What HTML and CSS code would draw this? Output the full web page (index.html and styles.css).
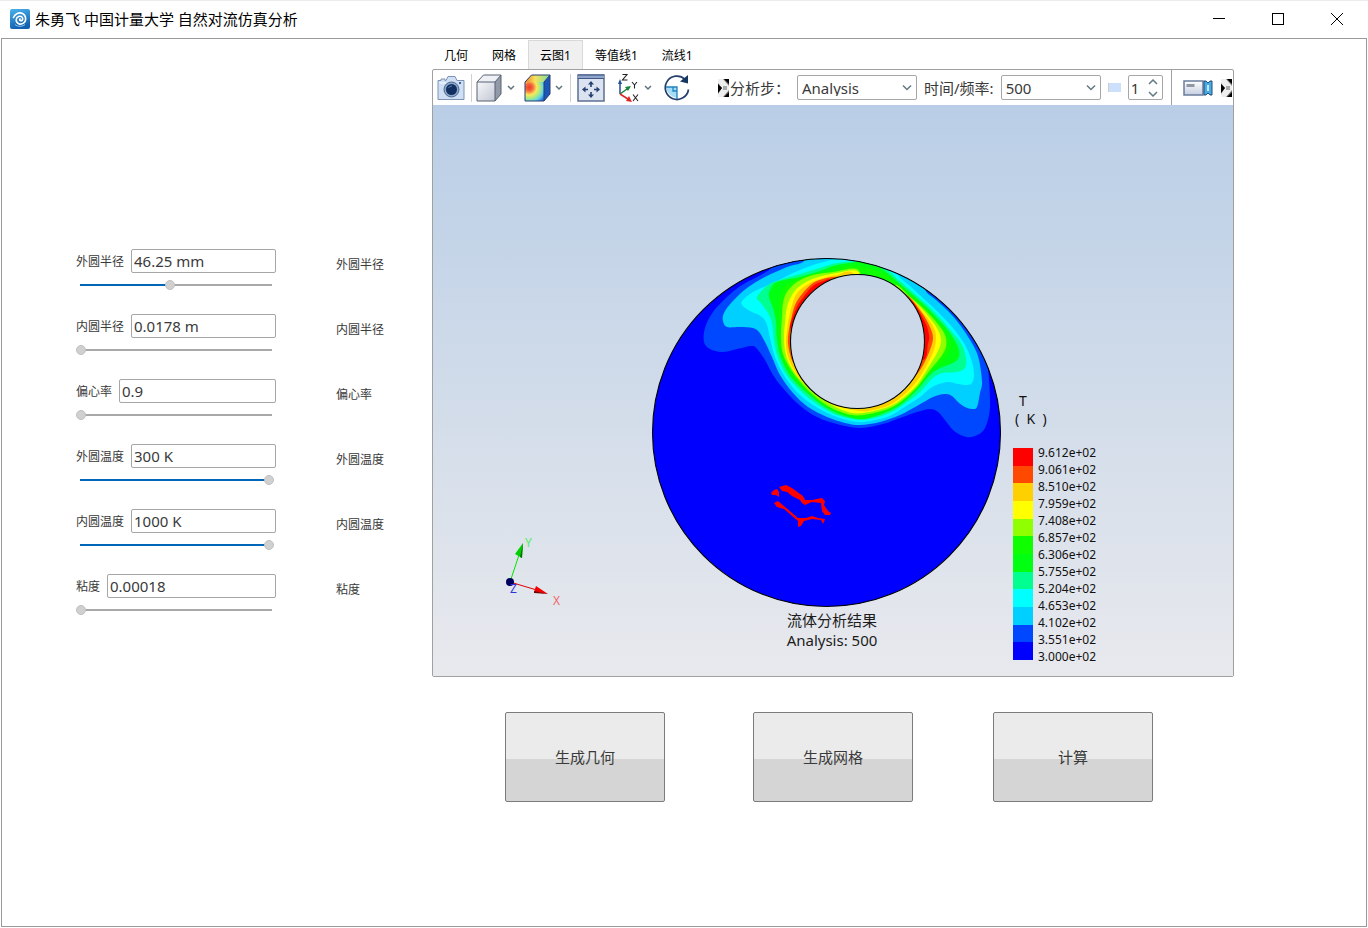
FILE: index.html
```html
<!DOCTYPE html>
<html lang="zh-CN">
<head>
<meta charset="utf-8">
<title>朱勇飞 中国计量大学 自然对流仿真分析</title>
<link rel="stylesheet" href="styles.css">
</head>
<body>
<header class="titlebar">
  <svg class="logo" width="20" height="20" viewBox="0 0 20 20" aria-hidden="true">
    <defs><linearGradient id="logoFill" x1="0" y1="0" x2="0.3" y2="1"><stop offset="0" stop-color="#4bb4ec"/><stop offset="1" stop-color="#1260b0"/></linearGradient></defs>
    <rect width="20" height="20" rx="2" fill="url(#logoFill)"/>
    <path d="M3.5 8.500C5 4.500 9 3 12.500 4.500C16.500 6.500 16.500 12 13.500 14.200C10.500 16.300 6 14.500 6.200 10.800C6.400 7.500 10.500 6.300 12.300 8.400C13.600 10.200 12 12.300 10.200 11.600C9.300 11.200 9.500 10 10.300 10" fill="none" stroke="#fff" stroke-width="1.600" stroke-linecap="round"/>
    <path d="M5 15.500C7.500 18 12.500 17.800 15 15.500" fill="none" stroke="#8fc8ee" stroke-width="1"/>
  </svg>
  <h1 class="title">朱勇飞 中国计量大学 自然对流仿真分析</h1>
  <div class="window-controls">
    <button type="button" aria-label="最小化"><svg width="12" height="12" viewBox="0 0 12 12"><path d="M0 5.500H12" stroke="#000"/></svg></button>
    <button type="button" aria-label="最大化"><svg width="12" height="12" viewBox="0 0 12 12"><rect x=".5" y=".5" width="11" height="11" fill="none" stroke="#000"/></svg></button>
    <button type="button" aria-label="关闭"><svg width="12" height="12" viewBox="0 0 12 12"><path d="M0 0L12 12M12 0L0 12" stroke="#000"/></svg></button>
  </div>
</header>

<main class="workspace">
  <form class="params">
    <div class="param">
      <div class="control">
        <div class="field"><label for="p1">外圆半径</label><input id="p1" type="text" value="46.25 mm"></div>
        <input class="slider half" type="range" aria-label="外圆半径" value="47">
      </div>
      <span class="caption">外圆半径</span>
    </div>
    <div class="param">
      <div class="control">
        <div class="field"><label for="p2">内圆半径</label><input id="p2" type="text" value="0.0178 m"></div>
        <input class="slider" type="range" aria-label="内圆半径" value="0">
      </div>
      <span class="caption">内圆半径</span>
    </div>
    <div class="param">
      <div class="control">
        <div class="field"><label for="p3">偏心率</label><input id="p3" type="text" value="0.9"></div>
        <input class="slider" type="range" aria-label="偏心率" value="0">
      </div>
      <span class="caption">偏心率</span>
    </div>
    <div class="param">
      <div class="control">
        <div class="field"><label for="p4">外圆温度</label><input id="p4" type="text" value="300 K"></div>
        <input class="slider full" type="range" aria-label="外圆温度" value="99">
      </div>
      <span class="caption">外圆温度</span>
    </div>
    <div class="param">
      <div class="control">
        <div class="field"><label for="p5">内圆温度</label><input id="p5" type="text" value="1000 K"></div>
        <input class="slider full" type="range" aria-label="内圆温度" value="99">
      </div>
      <span class="caption">内圆温度</span>
    </div>
    <div class="param">
      <div class="control">
        <div class="field"><label for="p6">粘度</label><input id="p6" type="text" value="0.00018"></div>
        <input class="slider" type="range" aria-label="粘度" value="0">
      </div>
      <span class="caption">粘度</span>
    </div>
  </form>

  <section class="results">
    <nav class="tabs">
      <button type="button">几何</button>
      <button type="button">网格</button>
      <button type="button" class="active">云图1</button>
      <button type="button">等值线1</button>
      <button type="button">流线1</button>
    </nav>

    <div class="viewer">
      <div class="toolbar">
        <button type="button" class="tool" aria-label="截图">
          <svg width="28" height="26" viewBox="0 0 28 26">
            <path d="M1 5.500H4V4H8V5.500H9L11 1.500H18L20 5.500H27V24.500H1Z" fill="#cfe0f4" stroke="#7c93b4"/>
            <path d="M2.500 8H9" stroke="#fff"/><rect x="22" y="7" width="2" height="2" fill="#42638f"/>
            <circle cx="14.500" cy="14.500" r="7.500" fill="#8ca7ca" stroke="#4e688f"/><circle cx="14.500" cy="14.500" r="5.500" fill="#12305f"/><path d="M11.500 13A3.500 3.500 0 0 1 15 11" fill="none" stroke="#5d80b2"/>
          </svg>
        </button>
        <span class="rule"></span>
        <button type="button" class="tool" aria-label="显示模式">
          <svg width="26" height="28" viewBox="0 0 26 28">
            <defs><linearGradient id="cubeFace" x2="1" y2="1"><stop stop-color="#f6f7fa"/><stop offset="1" stop-color="#c3c8d4"/></linearGradient></defs>
            <path d="M1 8L7.500 1H25L19 8Z" fill="#eef0f5"/><path d="M19 8L25 1V20L19 27Z" fill="#9299a7"/><path d="M1 8H19V27H1Z" fill="url(#cubeFace)"/>
            <path d="M1 8L7.500 1H25V20L19 27H1ZM1 8H19V27M19 8L25 1" fill="none" stroke="#596273" stroke-linejoin="round"/>
          </svg>
          <svg class="more" width="8" height="6" viewBox="0 0 8 6"><path d="M1 1L4 4L7 1" fill="none" stroke="#5e737d" stroke-width="1.500"/></svg>
        </button>
        <button type="button" class="tool contour-tool" aria-label="云图样式">
          <svg width="27" height="28" viewBox="0 0 27 28">
            <defs><radialGradient id="heat" cx=".22" cy=".28" r=".95"><stop stop-color="#ee3a28"/><stop offset=".2" stop-color="#f4683c"/><stop offset=".42" stop-color="#f9e85c"/><stop offset=".62" stop-color="#a5ea84"/><stop offset=".8" stop-color="#5fd4e8"/><stop offset="1" stop-color="#2776df"/></radialGradient>
            <linearGradient id="heatTop"><stop stop-color="#ef7a30"/><stop offset=".4" stop-color="#f5e35b"/><stop offset="1" stop-color="#7adba0"/></linearGradient></defs>
            <path d="M1 8L7.500 1H26L20 8Z" fill="url(#heatTop)"/><path d="M20 8L26 1V20L20 27Z" fill="#1b57b8"/><path d="M1 8H20V27H1Z" fill="url(#heat)"/>
            <path d="M1 8L7.500 1H26V20L20 27H1ZM20 8V27M20 8L26 1" fill="none" stroke="#2a3d70" stroke-linejoin="round"/>
          </svg>
          <svg class="more" width="8" height="6" viewBox="0 0 8 6"><path d="M1 1L4 4L7 1" fill="none" stroke="#5e737d" stroke-width="1.500"/></svg>
        </button>
        <span class="rule"></span>
        <button type="button" class="tool" aria-label="适应窗口">
          <svg width="28" height="28" viewBox="0 0 28 28">
            <rect x="1" y="1" width="26" height="26" fill="#dbe3f0" stroke="#5c6f92" stroke-width="1.500"/><path d="M1 3H27" stroke="#8fa5cb" stroke-width="3"/><path d="M1 1H27M1 4.500H27" stroke="#435a88"/>
            <path d="M14 7L17 10.500H14.800V13H13.200V10.500H11ZM14 24L11 20.500H13.200V18H14.800V20.500H17ZM5 15.500L8.500 12.500V14.700H11V16.300H8.500V18.500ZM23 15.500L19.500 18.500V16.300H17V14.700H19.500V12.500Z" fill="#273f70"/>
          </svg>
        </button>
        <button type="button" class="tool axis-tool" aria-label="视图方向">
          <svg width="24" height="30" viewBox="0 0 24 30">
            <g fill="none" stroke-width="1.500"><path d="M4 21V10" stroke="#244e98"/><path d="M4 21L11 16" stroke="#168334"/><path d="M4 21L12 26" stroke="#e02520"/></g>
            <path d="M2 11L4 6L6 11Z" fill="#244e98"/><path d="M9 14L15 13L12 18Z" fill="#168334"/><path d="M10 28L16 29L13 23Z" fill="#e02520"/>
            <g fill="none" stroke="#222" stroke-width="1.100"><path d="M6.500 1.500H11L6.500 7H11.500M16 9L18.500 12L21 9M18.500 12V15.500M17 21.500L22 28M22 21.500L17 28"/></g>
          </svg>
          <svg class="more" width="8" height="6" viewBox="0 0 8 6"><path d="M1 1L4 4L7 1" fill="none" stroke="#5e737d" stroke-width="1.500"/></svg>
        </button>
        <button type="button" class="tool rotate-tool" aria-label="旋转">
          <svg width="28" height="28" viewBox="0 0 28 28">
            <path d="M2 13H14V24Q6 23 2 13Z" fill="#a5dcf8"/><path d="M2 13H14V25M10 13V17H14" fill="none" stroke="#2183bd" stroke-width="1.300"/>
            <path d="M25.500 15.500A11.700 11.700 0 1 1 22 5.300" fill="none" stroke="#263f6d" stroke-width="1.700"/><path d="M25 1V9.500L17 7.500Z" fill="#173763"/>
          </svg>
        </button>
        <svg class="grip" width="11" height="18" viewBox="0 0 11 18"><rect width="11" height="18" fill="#777"/><path d="M0 0H5L11 7V11L5 18H0V15L4 9L0 4Z" fill="#eee"/><path d="M6 0H11V5ZM6 18H11V13ZM0 5L4 9L0 14Z" fill="#000"/><rect x="5" y="7" width="4" height="4" fill="#aaa"/></svg>
        <label for="step">分析步：</label>
        <span class="picker step"><select id="step"><option>Analysis</option></select><svg width="12" height="8" viewBox="0 0 12 8"><path d="M2 1.500L6 5.500L10 1.500" fill="none" stroke="#637982" stroke-width="1.500"/></svg></span>
        <label for="time">时间/频率:</label>
        <span class="picker time"><select id="time"><option>500</option></select><svg width="12" height="8" viewBox="0 0 12 8"><path d="M2 1.500L6 5.500L10 1.500" fill="none" stroke="#637982" stroke-width="1.500"/></svg></span>
        <span class="chip"></span>
        <span class="spin"><input type="text" aria-label="步长" value="1"><svg width="12" height="18" viewBox="0 0 12 18"><path d="M2 5L6 1L10 5M2 13L6 17L10 13" fill="none" stroke="#637982" stroke-width="1.500"/></svg></span>
        <span class="divider"></span>
        <button type="button" class="tool video-tool" aria-label="录制">
          <svg width="30" height="18" viewBox="0 0 30 18">
            <defs><linearGradient id="vid" x2="0" y2="1"><stop stop-color="#fff"/><stop offset="1" stop-color="#c5cfe0"/></linearGradient></defs>
            <rect x="1" y="2" width="19" height="14" fill="url(#vid)" stroke="#6a7c9c" stroke-width="1.500"/><rect x="3.500" y="5" width="8" height="3" fill="#9298a2"/>
            <path d="M21 2H23L25 4L27 2H29V16H27L25 14L23 16H21Z" fill="#4ba9e1" stroke="#244c80"/><path d="M24 6H26V12H24Z" fill="#bcecff"/>
          </svg>
        </button>
        <svg class="grip end" width="11" height="18" viewBox="0 0 11 18"><rect width="11" height="18" fill="#777"/><path d="M0 0H5L11 7V11L5 18H0V15L4 9L0 4Z" fill="#eee"/><path d="M6 0H11V5ZM6 18H11V13ZM0 5L4 9L0 14Z" fill="#000"/><rect x="5" y="7" width="4" height="4" fill="#aaa"/></svg>
      </div>

      <svg class="scene" viewBox="433 105 800 571" role="img" aria-label="流体分析结果">
        <defs><clipPath id="annulus"><path clip-rule="evenodd" d="M652.500 432.500a174 174 0 1 0 348 0a174 174 0 1 0 -348 0ZM790 341.500a67.500 67.500 0 1 0 135 0a67.500 67.500 0 1 0 -135 0Z"/></clipPath></defs>
        <g clip-path="url(#annulus)">
          <rect x="652" y="258" width="350" height="350" fill="#0000ff"/>
          <g id="contours"></g>
        </g>
        <g fill="none" stroke="#000" stroke-width="1.100"><circle cx="826.500" cy="432.500" r="174"/><circle cx="857.500" cy="341.500" r="67"/></g>
        <g fill="#ff0000">
          <path d="M771 493L774 490L777 489L779 492L779 497L776 495L772 495Z"/>
          <path d="M779 487L786 485L792 488L803 496L805 500L812 500L822 498L825 501L824 505L828 511L831 513L830 515L825 515L822 511L821 503L812 502L805 505L802 503L800 500L792 496L787 492L782 491Z"/>
          <path d="M774 503L778 501L798 518L806 518L812 516L818 518L825 519L823 524L821 520L812 519L804 521L801 526L798 527L798 521L784 509L777 507Z"/>
        </g>
        <g class="triad">
          <path d="M510 582L521 549" stroke="#00e800"/><path d="M523 543L515 554L522 558Z" fill="#00d000"/><path d="M523 543L520 557L522 558Z" fill="#087008"/>
          <path d="M510 582L540 591" stroke="#e00000"/><path d="M548 594L536 586L534 592Z" fill="#f00000"/><path d="M548 594L534 591L534 593Z" fill="#6c0808"/>
          <circle cx="510" cy="582" r="4" fill="#00005c"/>
          <text x="525" y="547" fill="#50f060">Y</text><text x="553" y="605" fill="#f06868">X</text><text x="510" y="593" fill="#3030e0">Z</text>
        </g>
        <g class="result-title"><text x="832" y="626">流体分析结果</text><text x="832" y="646">Analysis: 500</text></g>
        <g class="legend-title"><text x="1019" y="406">T</text><text x="1015" y="424">(&#160; K&#160; )</text></g>
        <g id="swatches" shape-rendering="crispEdges"></g>
        <g id="scale" class="scale"></g>
      </svg>
    </div>

    <div class="actions">
      <button type="button">生成几何</button>
      <button type="button">生成网格</button>
      <button type="button">计算</button>
    </div>
  </section>
</main>
<script src="plot.js"></script>
</body>
</html>
```

FILE: styles.css
```css
* { box-sizing: border-box; }

body {
  margin: 0;
  min-height: 100vh;
  display: flex;
  flex-direction: column;
  padding: 0 1px 1px;
  background: #fff;
  border-top: 1px solid #ececec;
  color: #3a3a3a;
  font: 12px/16px "Noto Sans", "Noto Sans CJK SC", sans-serif;
}

button, input, select { font: inherit; color: inherit; }
button { border: 0; padding: 0; background: none; }

.titlebar { display: flex; align-items: center; height: 37px; padding: 0 1px 1px 9px; }
.title { margin: 0 0 0 5px; color: #000; font-size: 15px; line-height: 20px; font-weight: 400; }
.window-controls { display: flex; margin-left: auto; }
.window-controls button { display: grid; place-items: center; width: 59px; height: 36px; }

.workspace {
  flex: 1;
  display: grid;
  grid-template-columns: 430px 1fr;
  border: 1px solid #999;
  padding-right: 132px;
}

/* Parameter form */
.params { display: flex; flex-direction: column; gap: 24px; padding: 210px 0 0 74px; }
.param { display: flex; align-items: flex-start; gap: 60px; }
.control { width: 200px; }
.field { display: flex; align-items: center; gap: 7px; }
.field label { flex: none; padding-top: 2px; }
.field input {
  flex: 1;
  min-width: 0;
  height: 24px;
  padding: 0 2px;
  border: 1px solid #a6a6a6;
  border-radius: 2px;
  background: #fff;
  font-size: 15px;
}
.caption { padding-top: 8px; }

.slider {
  --fill: 0px;
  appearance: none;
  display: block;
  width: 100%;
  height: 10px;
  margin: 7px 0 0;
  background:
    linear-gradient(#0067b8, #0067b8) 4px 50% / var(--fill) 2px no-repeat,
    linear-gradient(#a8a8a8, #a8a8a8) 4px 50% / calc(100% - 8px) 2px no-repeat;
}
.slider.half { --fill: 45%; }
.slider.full { --fill: 95%; }
.slider::-webkit-slider-thumb {
  appearance: none;
  width: 10px;
  height: 10px;
  border: 1px solid #c0c0c0;
  border-radius: 50%;
  background: #d0d0d0;
}

/* Result tabs */
.results { min-width: 0; }
.tabs { display: flex; height: 30px; padding-top: 1px; }
.tabs button { padding: 2px 12px 0; color: #000; }
.tabs .active { padding: 1px 11px 0; border: 1px solid #d9d9d9; border-bottom: 0; background: #f0f0f0; }

.viewer { border: 1px solid #a0a0a0; border-radius: 2px; overflow: hidden; }

.toolbar { display: flex; align-items: center; height: 35px; padding-left: 4px; font-size: 15px; white-space: nowrap; }
.toolbar > * { flex: none; }
.toolbar svg { display: block; }
.tool { display: flex; align-items: center; }
.more { margin-left: 5px; }
.rule { width: 1px; height: 28px; margin: 0 4px 0 6px; background: #d0d0d0; }
.contour-tool { margin-left: 9px; }
.contour-tool + .rule { margin: 0 6px 0 7px; }
.contour-tool .more { margin-left: 4px; }
.axis-tool { margin-left: 11px; }
.axis-tool .more { margin-left: 4px; }
.rotate-tool { margin-left: 11px; }
.grip { margin-left: 27px; }
.toolbar label { margin: 0 7px 0 1px; }
.picker { position: relative; }
.picker svg { position: absolute; right: 4px; top: 9px; pointer-events: none; }
.picker select {
  appearance: none;
  display: block;
  width: 100%;
  height: 25px;
  padding: 0 4px;
  border: 1px solid #a6a6a6;
  border-radius: 2px;
  background: #fff;
}
.step { width: 120px; margin-right: 6px; }
.time { width: 100px; }
.chip { width: 13px; height: 9px; margin: 0 7px; border-left: 1px solid #ccc; background: #cce0fc; }
.spin { display: flex; align-items: center; width: 35px; height: 25px; border: 1px solid #a6a6a6; border-radius: 2px; }
.spin input { width: 18px; padding: 0 0 0 2px; border: 0; background: none; }
.divider { align-self: stretch; width: 1px; margin: 0 11px 0 8px; background: #a0a0a0; }
.grip.end { margin-left: 8px; }

/* Contour plot */
.scene { display: block; width: 100%; background: linear-gradient(#b9cee6, #e8e9ed); }
.triad { fill: none; font-size: 12px; }
.result-title { fill: #1c1c1c; font-size: 15px; text-anchor: middle; }
.legend-title { fill: #111; font-size: 14px; }
.scale { fill: #111; font-size: 12px; }

/* Actions */
.actions { display: grid; grid-template-columns: 248px 240px 160px; padding: 35px 0 0 73px; }
.actions button {
  width: 160px;
  height: 90px;
  border: 1px solid #7c7c7c;
  border-radius: 2px;
  background: linear-gradient(#ebebeb 52%, #d5d5d5 52%);
  font-size: 15px;
}
```

FILE: plot.js
```js
const NS = "http://www.w3.org/2000/svg";

// Isotherm outlines, coolest first; each one is closed outside the annulus or inside the hole.
const isotherms = [
  ["#0048ff", "770,269 742,285 727,297 713,312 705,328 704,342 710,349 722,352 737,349 752,346 758,350 765,360 773,375 782,387 797,403 813,415 833,423 860,428 883,424 900,418 917,412 930,409 938,412 945,420 953,430 963,436 972,437 982,432 987,423 990,407 989,380 987,363 982,350 1000,320 960,260 850,235 780,250"],
  ["#00d0ff", "803,262 787,267 765,277 747,288 732,302 724,313 723,321 727,327 740,327 753,328 759,332 765,342 772,357 780,375 793,393 808,407 827,417 845,423 860,425 880,422 900,415 917,406 933,397 945,394 952,396 958,402 965,407 972,409 977,407 980,393 982,382 979,360 973,345 960,325 947,310 936,300 925,289 930,270 850,235 810,250"],
  ["#00ffff", "833,259 813,265 793,273 773,283 753,292 743,300 742,305 750,311 762,317 767,325 770,338 775,357 785,377 800,395 818,408 837,417 860,422 887,417 903,408 920,397 932,387 947,382 958,384 967,385 972,383 974,375 972,362 965,345 953,328 938,312 925,300 910,286 898,275 895,260 860,245"],
  ["#00ff90", "860,261 837,263 823,267 800,274 780,280 768,285 757,297 761,303 768,313 772,323 774,340 778,358 788,377 805,395 823,408 840,416 863,420 887,414 903,405 920,392 933,378 943,373 957,372 965,368 966,358 962,345 953,333 940,318 925,303 902,283 885,268 872,262"],
  ["#00ff10", "860,262 837,265 820,271 800,277 777,282 770,290 769,297 773,308 776,322 777,340 781,358 791,377 807,393 825,407 842,415 863,419 887,412 903,403 918,389 930,375 940,368 953,363 959,357 958,347 950,333 937,318 922,303 899,283 882,269 870,264"],
  ["#10ff00", "855,266 830,271 803,277 786,285 780,295 779,310 779,325 779,340 783,358 793,377 808,392 826,406 843,413 863,417 887,410 903,401 918,387 931,371 942,362 949,352 951,344 944,330 934,318 920,303 899,286 880,272"],
  ["#90ff00", "857,269 833,272 813,275 797,282 787,292 783,303 782,317 781,333 782,350 787,363 797,378 812,394 828,406 847,414 863,415 888,409 903,400 918,386 930,370 940,358 946,347 945,335 937,323 923,308 910,297 897,285 890,290 865,285"],
  ["#ffff00", "857,271 837,273 815,278 800,286 792,295 787,307 785,323 784,337 785,350 789,363 798,377 813,392 830,404 848,412 863,413 888,407 903,398 917,385 928,368 937,353 941,342 939,332 932,321 920,307 905,294 890,285 865,285"],
  ["#ffd000", "853,273 837,275 827,277 810,283 798,292 793,302 789,317 787,330 786,343 788,357 796,373 805,384 820,396 837,406 860,411 873,410 890,405 905,394 917,381 927,365 934,350 936,338 934,328 925,315 907,296 880,300"],
  ["#ff4800", "844,279 833,277 823,279 813,283 802,294 795,305 791,320 788,337 789,350 794,363 805,360 830,350 860,330 880,320 900,300 907,295 922,313 930,327 933,338 930,350 922,367 910,383 897,396 889,397 870,370 850,330 848,295"],
  ["#ff0000", "838,283 830,279 824,281 813,286 802,299 796,309 790,328 800,330 820,320 850,320 890,315 905,304 912,301 925,322 929,335 928,344 922,360 890,340 850,320 840,295"]
];

// Closed Catmull-Rom spline through the points of an outline.
function smooth(text) {
  const p = text.split(" ").map(pair => pair.split(",").map(Number));
  const n = p.length;
  let d = `M${p[0]}`;
  for (let i = 0; i < n; i++) {
    const a = p[(i + n - 1) % n], b = p[i], c = p[(i + 1) % n], e = p[(i + 2) % n];
    d += `C${b[0] + (c[0] - a[0]) / 6} ${b[1] + (c[1] - a[1]) / 6} ${c[0] - (e[0] - b[0]) / 6} ${c[1] - (e[1] - b[1]) / 6} ${c}`;
  }
  return d + "Z";
}

function add(parent, tag, attributes, text) {
  const node = document.createElementNS(NS, tag);
  for (const key in attributes) node.setAttribute(key, attributes[key]);
  if (text) node.textContent = text;
  document.getElementById(parent).append(node);
}

isotherms.forEach(([fill, outline]) => add("contours", "path", { fill, d: smooth(outline) }));

const colours = isotherms.map(([fill]) => fill).reverse().concat("#0000ff");
const step = 212 / colours.length;
colours.forEach((fill, i) => add("swatches", "rect", { x: 1013, y: 448 + i * step, width: 20, height: step, fill }));

["9.612", "9.061", "8.510", "7.959", "7.408", "6.857", "6.306", "5.755", "5.204", "4.653", "4.102", "3.551", "3.000"]
  .forEach((value, i) => add("scale", "text", { x: 1038, y: 457 + i * 17 }, value + "e+02"));
```
